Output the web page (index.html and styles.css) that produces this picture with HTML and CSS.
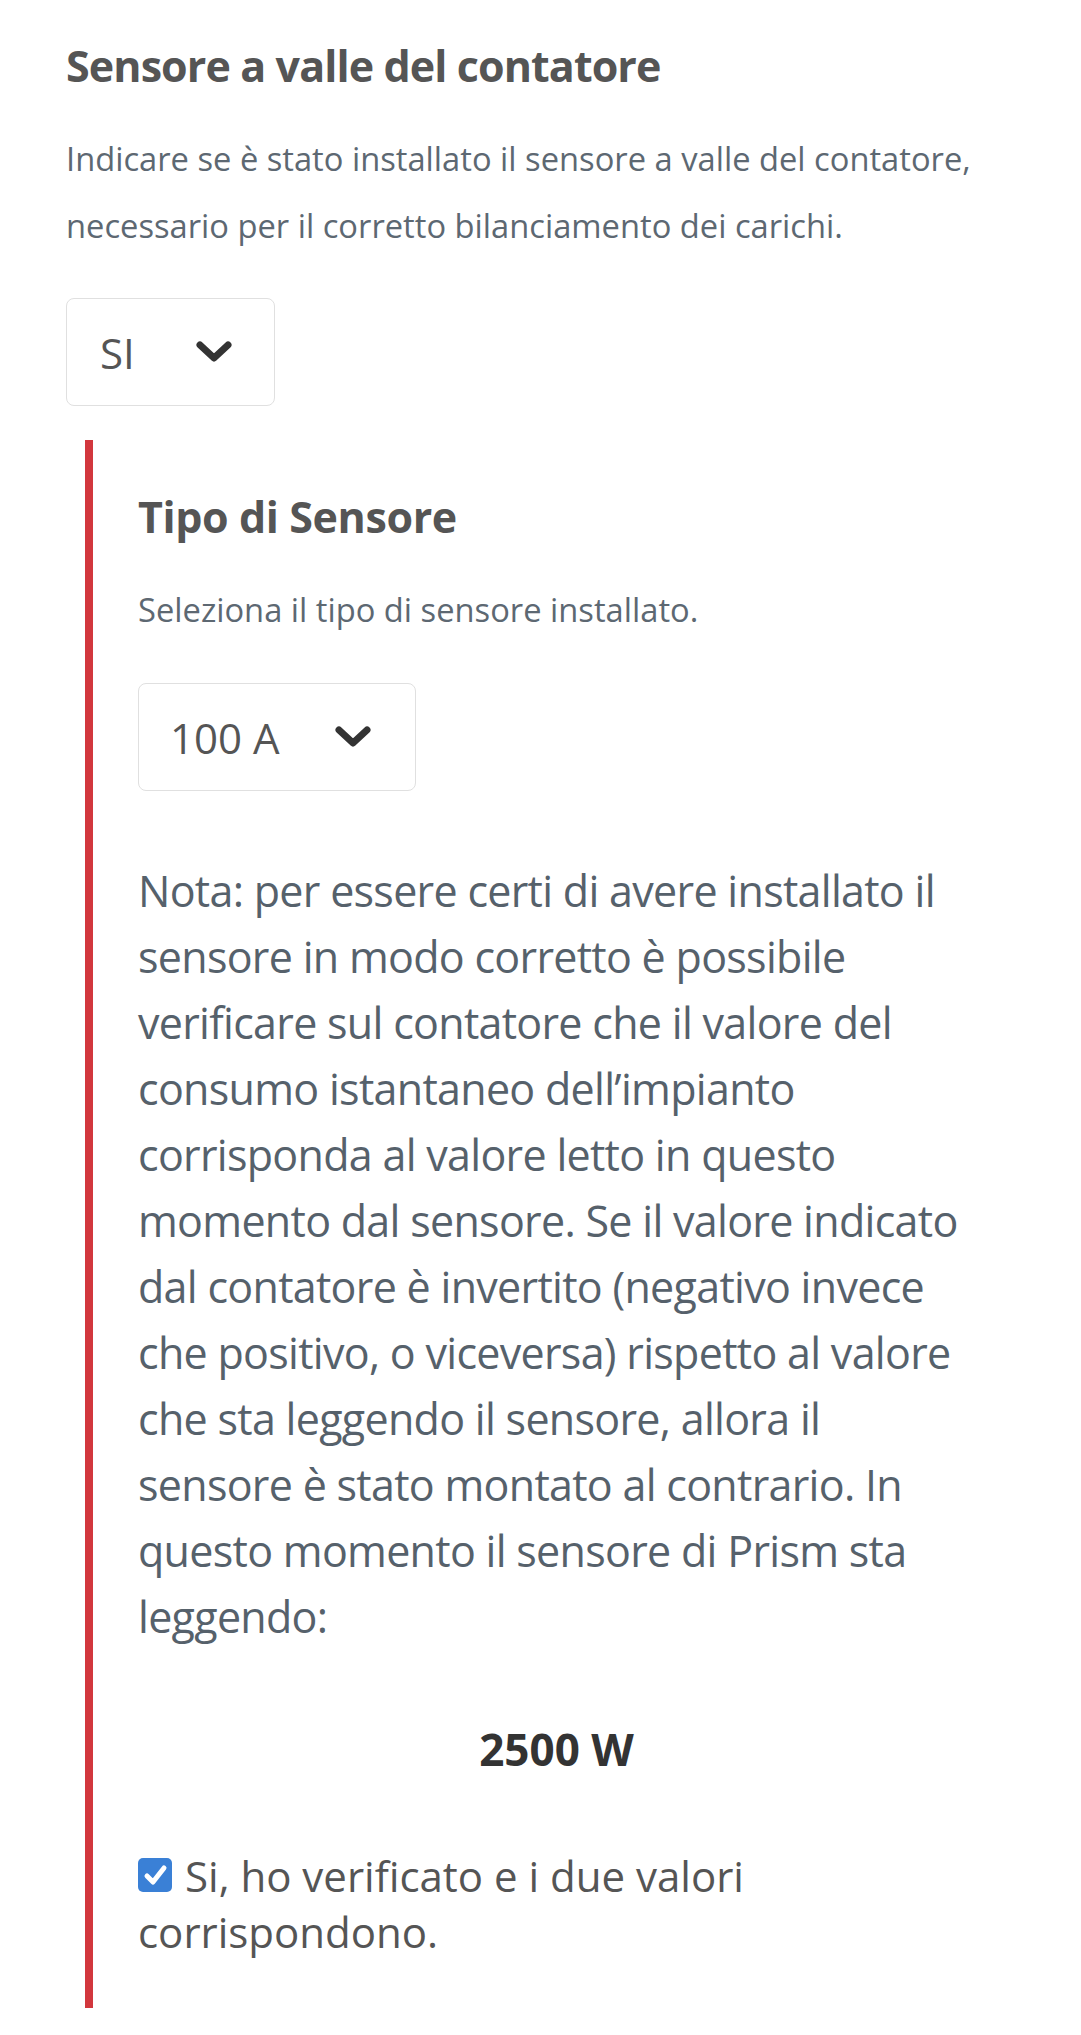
FILE: index.html
```html
<!DOCTYPE html>
<html lang="it">
<head>
    <meta charset="UTF-8">
    <meta name="viewport" content="width=device-width, initial-scale=1.0">
    <title>Sensore a valle del contatore</title>
    <link rel="stylesheet" href="styles.css">
</head>
<body>
    <div class="page">
        <h2 class="field-title">Sensore a valle del contatore</h2>
        <p class="field-help">Indicare se è stato installato il sensore a valle del contatore, necessario per il corretto bilanciamento dei carichi.</p>
        <div class="select select-yesno">
            <span class="select-value">SI</span>
            <svg class="chevron" width="38" height="24" viewBox="0 0 38 24"><polyline points="5,5 19,18 33,5" fill="none" stroke="#333" stroke-width="7" stroke-linecap="round" stroke-linejoin="round"/></svg>
        </div>

        <div class="sub-field">
            <h3 class="sub-title">Tipo di Sensore</h3>
            <p class="field-help">Seleziona il tipo di sensore installato.</p>
            <div class="select select-type">
                <span class="select-value">100 A</span>
                <svg class="chevron" width="38" height="24" viewBox="0 0 38 24"><polyline points="5,5 19,18 33,5" fill="none" stroke="#333" stroke-width="7" stroke-linecap="round" stroke-linejoin="round"/></svg>
            </div>
            <p class="note">Nota: per essere certi di avere installato il sensore in modo corretto è possibile verificare sul contatore che il valore del consumo istantaneo dell’impianto corrisponda al valore letto in questo momento dal sensore. Se il valore indicato dal contatore è invertito (negativo invece che positivo, o viceversa) rispetto al valore che sta leggendo il sensore, allora il sensore è stato montato al contrario. In questo momento il sensore di Prism sta leggendo:</p>
            <p class="reading">2500 W</p>
            <label class="confirm"><span class="check"><svg width="34" height="34" viewBox="0 0 34 34"><polyline points="9,18 15,24 26,10" fill="none" stroke="#fff" stroke-width="5" stroke-linecap="round" stroke-linejoin="round"/></svg></span>Si, ho verificato e i due valori corrispondono.</label>
        </div>
    </div>
</body>
</html>
```

FILE: styles.css
```css
body {
    font-family: "Open Sans", "Noto Sans", sans-serif;
    margin: 0;
    padding: 0;
    background-color: #fff;
}
.page {
    padding: 38px 65px 0 66px;
}
.field-title {
    margin: 0;
    font-size: 43px;
    line-height: 56px;
    letter-spacing: -0.9px;
    font-weight: bold;
    color: #555;
}
.field-help {
    margin: 31px 0 0 0;
    font-size: 32.7px;
    line-height: 67px;
    color: #5d6872;
}
.select {
    display: flex;
    align-items: center;
    justify-content: space-between;
    box-sizing: border-box;
    height: 108px;
    margin-top: 39px;
    padding: 0 41px 0 33px;
    border: 1px solid #e0e0e0;
    border-radius: 8px;
    background-color: #fff;
}
.select-yesno {
    width: 209px;
}
.select-type {
    width: 278px;
    margin-top: 40px;
    padding-left: 31px;
    padding-right: 43px;
}
.select-value {
    font-size: 42px;
    color: #555;
}
.chevron {
    display: block;
}
.sub-field {
    margin: 34px 0 0 19px;
    padding: 50px 41px 48px 45px;
    border-left: 8px solid #d2373d;
}
.sub-title {
    margin: 0;
    font-size: 43px;
    line-height: 54px;
    letter-spacing: -0.4px;
    font-weight: bold;
    color: #555;
}
.sub-field .field-help {
    margin-top: 32px;
}
.note {
    margin: 67px 0 0 0;
    font-size: 43px;
    line-height: 66px;
    letter-spacing: -0.7px;
    color: #56616b;
}
.reading {
    margin: 71px 0 0 0;
    font-size: 44px;
    line-height: 56px;
    font-weight: bold;
    text-align: center;
    color: #333;
}
.confirm {
    display: block;
    margin-top: 71px;
    font-size: 42px;
    line-height: 56px;
    color: #555;
}
.check {
    display: inline-block;
    width: 34px;
    height: 34px;
    margin-right: 13px;
    border-radius: 5px;
    background-color: #3a80d6;
    vertical-align: baseline;
}
.check svg {
    display: block;
}
```
